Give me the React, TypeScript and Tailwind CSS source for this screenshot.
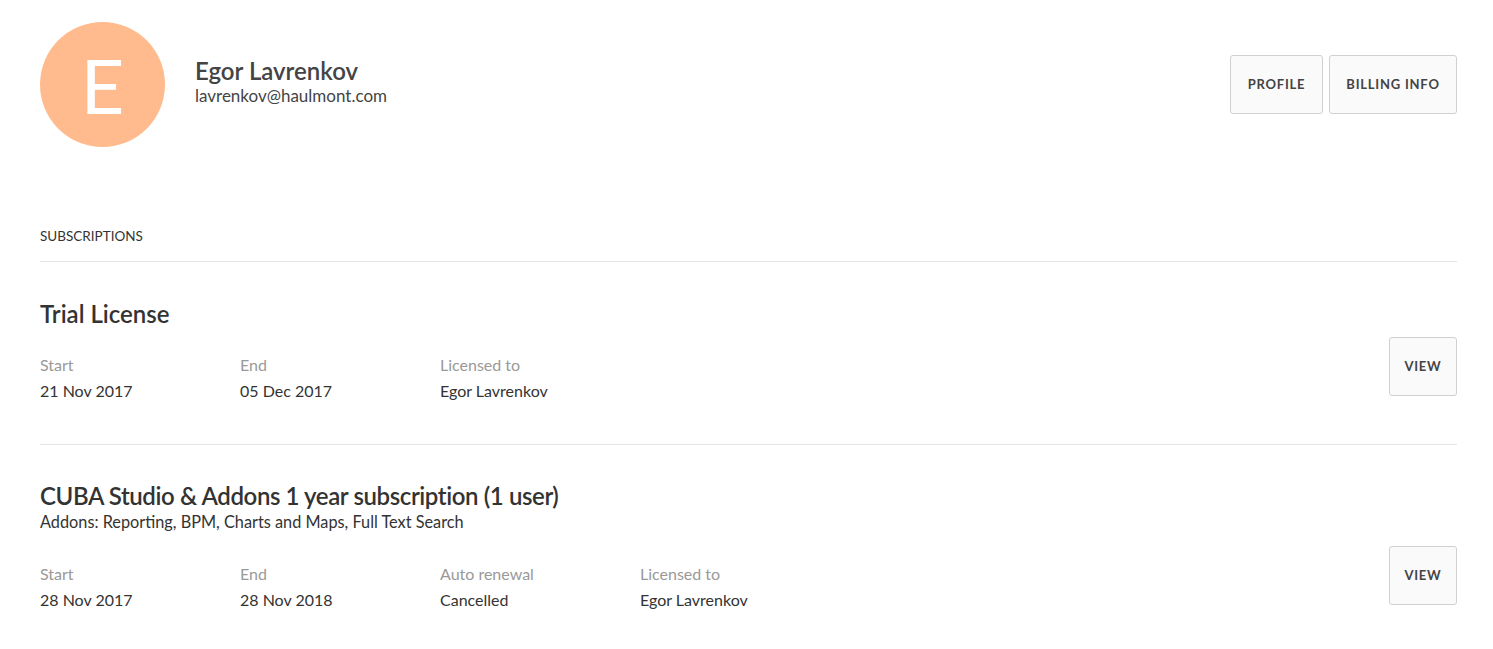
import React from "react";

const font = { fontFamily: "Lato, 'Noto Sans', 'Liberation Sans', sans-serif" };

function Btn({ children, className = "" }: { children: React.ReactNode; className?: string }) {
  return (
    <button
      className={`h-[59px] rounded-[3px] border border-[#d0d0d0] bg-[#fafafa] text-[13px] font-bold tracking-[0.06em] text-[#444] uppercase ${className}`}
    >
      {children}
    </button>
  );
}

function Field({ label, value }: { label: string; value: string }) {
  return (
    <div className="w-[200px]">
      <div className="text-[16px] leading-[26px] text-[#999]">{label}</div>
      <div className="text-[16px] leading-[26px] text-[#333]">{value}</div>
    </div>
  );
}

export default function App() {
  return (
    <div className="min-h-screen bg-white pl-[40px] pr-[36px]" style={font}>
      <div className="flex items-start pt-[22px]">
        <div className="flex h-[125px] w-[125px] shrink-0 items-center justify-center rounded-full bg-[#ffbb8d] text-[76px] font-normal leading-none text-white">
          E
        </div>
        <div className="ml-[30px] pt-[34px]">
          <div className="text-[24px] font-semibold leading-[30px] text-[#444]">Egor Lavrenkov</div>
          <div className="text-[17px] leading-[20px] text-[#444]">lavrenkov@haulmont.com</div>
        </div>
        <div className="ml-auto mt-[33px] flex gap-[6px]">
          <Btn className="w-[93px]">Profile</Btn>
          <Btn className="w-[128px]">Billing info</Btn>
        </div>
      </div>

      <div className="mt-[80px] border-b border-[#e5e5e5] pb-[16px] text-[13.5px] leading-[18px] text-[#333]">
        SUBSCRIPTIONS
      </div>

      <div className="border-b border-[#e5e5e5] pb-[40px] pt-[38px]">
        <div className="text-[24px] font-semibold leading-[28px] text-[#333]">Trial License</div>
        <div className="mt-[24px] flex items-start">
          <Field label="Start" value="21 Nov 2017" />
          <Field label="End" value="05 Dec 2017" />
          <Field label="Licensed to" value="Egor Lavrenkov" />
          <Btn className="ml-auto -mt-[15px] w-[68px]">View</Btn>
        </div>
      </div>

      <div className="pt-[37px]">
        <div className="text-[24px] font-semibold leading-[28px] tracking-[-0.4px] text-[#333]">
          CUBA Studio &amp; Addons 1 year subscription (1 user)
        </div>
        <div className="text-[16.3px] leading-[24px] text-[#333]">
          Addons: Reporting, BPM, Charts and Maps, Full Text Search
        </div>
        <div className="mt-[27px] flex items-start">
          <Field label="Start" value="28 Nov 2017" />
          <Field label="End" value="28 Nov 2018" />
          <Field label="Auto renewal" value="Cancelled" />
          <Field label="Licensed to" value="Egor Lavrenkov" />
          <Btn className="ml-auto -mt-[15px] w-[68px]">View</Btn>
        </div>
      </div>
    </div>
  );
}
